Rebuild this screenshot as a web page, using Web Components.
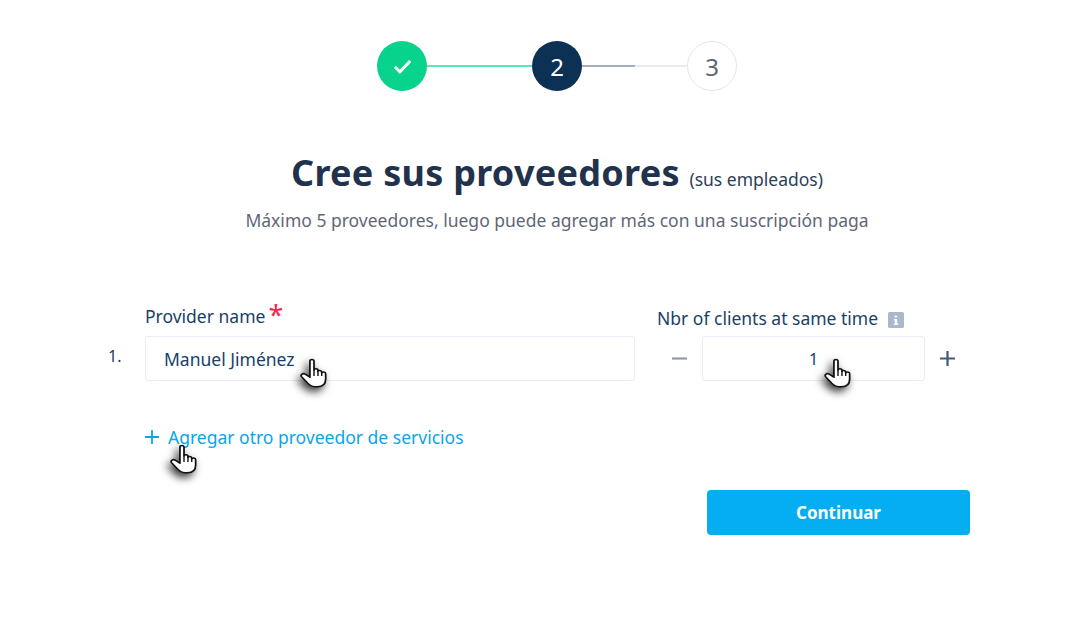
<!DOCTYPE html>
<html lang="es"><head><meta charset="utf-8"><title>Cree sus proveedores</title>
<style>html,body{margin:0;background:#fff;font-family:"Noto Sans",sans-serif}</style></head>
<body>
<provider-page>
  <step-bar slot="steps"></step-bar>
  <page-heading slot="heading"></page-heading>
  <provider-form slot="form"></provider-form>
</provider-page>
<script>
function def(name, html){
  customElements.define(name, class extends HTMLElement{
    constructor(){super();this.attachShadow({mode:'open'}).innerHTML=html;}
  });
}
def('provider-page',`<style>:host{display:block;width:1082px;height:630px;overflow:hidden;box-sizing:border-box;padding:41px 0 0 108px}
.c{width:861px;padding-left:37px;box-sizing:border-box}</style>
<div class="c"><slot name="steps"></slot><slot name="heading"></slot></div><slot name="form"></slot>`);
def('step-bar',`<style>:host{display:flex;justify-content:center;align-items:center;height:50px}
.s{width:50px;height:50px;border-radius:50%;box-sizing:border-box;display:flex;align-items:center;justify-content:center;font:400 24px "Noto Sans",sans-serif;flex:none}
.a{background:#08d38d}.b{background:#0d3154;color:#fff}.d{background:#fff;border:1px solid #e6e7ea;color:#596579}
.l{width:105px;height:2px;background:#5fe3b8}.m{width:53px;height:2px;background:#a5adbf}.n{width:52px;height:2px;background:#e9ebef}</style>
<div class="s a"><svg width="19" height="15" viewBox="0 0 19 15" fill="none"><path d="M1.8 7.8 6.9 12.8 17.2 2" stroke="#fff" stroke-width="3"/></svg></div>
<div class="l"></div><div class="s b">2</div><div class="m"></div><div class="n"></div><div class="s d">3</div>`);
def('page-heading',`<style>:host{display:block;text-align:center;color:#21324c}
h1{margin:0;padding-top:58px;font:700 36px/48px "Noto Sans",sans-serif;letter-spacing:.27px}
small{font:400 17.5px "Noto Sans",sans-serif;letter-spacing:0;margin-left:0;color:#2c4058}
p{margin:0;padding-top:12px;font:400 17.5px/22px "Noto Sans",sans-serif;color:#5f6777}</style>
<h1>Cree sus proveedores <small>(sus empleados)</small></h1>
<p>Máximo 5 proveedores, luego puede agregar más con una suscripción paga</p>`);
def('hand-cursor',`<style>:host{position:absolute;width:28px;height:30px;display:block;pointer-events:none}
svg{display:block;overflow:visible;filter:drop-shadow(-3px 4px 4px rgba(0,0,0,.8))}</style>
<svg width="28" height="30" viewBox="0 0 24 30" preserveAspectRatio="none"><path d="M8.5 3.2C8.5.8 12 .8 12 3.2V12C12 10.4 15.4 10.4 15.4 12.4V13.6C15.4 12 18.6 12 18.6 14V15C18.6 13.6 22 13.6 22 15.8V21C22 25.2 20 28.8 15 28.8H13C9 28.8 7 26.2 5 23.2L1.3 18.6C.2 16.6 2.6 14.8 4.4 16.1L8.5 19.2Z" fill="#fff" stroke="#111" stroke-width="1.5" stroke-linejoin="round"/><path d="M12 11.5V18M15.4 13V18M18.6 14.5V18" stroke="#111" stroke-width="1.2" fill="none"/></svg>`);
def('provider-form',`<style>:host{display:block;position:relative;color:#17406a;font:400 17.5px "Noto Sans",sans-serif}
.g{display:grid;grid-template-columns:37px 490px 313px;column-gap:0;padding-top:73px}
.lab{height:32px;display:flex;align-items:flex-start;line-height:22px;padding-top:1px;box-sizing:border-box;color:#1b3f66}
.lab.r{margin-left:22px;width:313px;white-space:nowrap;padding-top:3px}
.req{color:#f5274f;font-size:27px;line-height:22px;margin-left:3px;margin-top:-1px}
.num{font-size:16px;line-height:41px;color:#17406a}
.box{height:45px;box-sizing:border-box;border:1px solid #e8ecf4;border-radius:3px;background:#fff;display:flex;align-items:center;color:#17406a}
.name{padding-left:18px}
.qty{display:flex;align-items:center;margin-left:22px;width:313px;padding-left:15px;box-sizing:border-box}
.qty .box{width:223px;justify-content:center;margin:0 15px;font-size:16px}
.info{margin:5px 0 0 10px;flex:none}
.add{display:flex;align-items:center;margin:44px 0 0 37px;height:24px;color:#09a6ea;line-height:24px;gap:9px}
.actions{display:flex;justify-content:flex-end;width:862px;margin-top:41px}
button{width:263px;height:45px;border:0;border-radius:4px;background:#05aef2;color:#fff;font:700 17px "Noto Sans",sans-serif}
hand-cursor.h1{left:192px;top:127px}hand-cursor.h2{left:716px;top:127px}hand-cursor.h3{left:62px;top:213px}
</style>
<div class="g">
  <div></div><div class="lab">Provider name<span class="req">*</span></div>
  <div class="lab r">Nbr of clients at same time<svg class="info" width="16" height="16" viewBox="0 0 16 16"><rect width="16" height="16" rx="1.5" fill="#a9b9cb"/><path d="M6.6 3.4h2.6v2.2H6.6zM6 7h3.2v4.4H10.3V13H5.8V11.4H6.9V8.5H6z" fill="#fff"/></svg></div>
  <div class="num">1.</div>
  <div class="box name">Manuel Jiménez</div>
  <div class="qty">
    <svg width="15" height="15" viewBox="0 0 15 15"><path d="M0 7.5H15" stroke="#8f9aaa" stroke-width="2.2"/></svg>
    <div class="box">1</div>
    <svg width="15" height="15" viewBox="0 0 15 15"><path d="M0 7.5H15M7.5 0V15" stroke="#3f5a78" stroke-width="2.2"/></svg>
  </div>
</div>
<div class="add"><svg width="14" height="14" viewBox="0 0 14 14"><path d="M0 7H14M7 0V14" stroke="#09a6ea" stroke-width="1.8"/></svg><span>Agregar otro proveedor de servicios</span></div>
<div class="actions"><button type="button">Continuar</button></div>
<hand-cursor class="h1"></hand-cursor><hand-cursor class="h2"></hand-cursor><hand-cursor class="h3"></hand-cursor>`);
</script>
</body></html>
